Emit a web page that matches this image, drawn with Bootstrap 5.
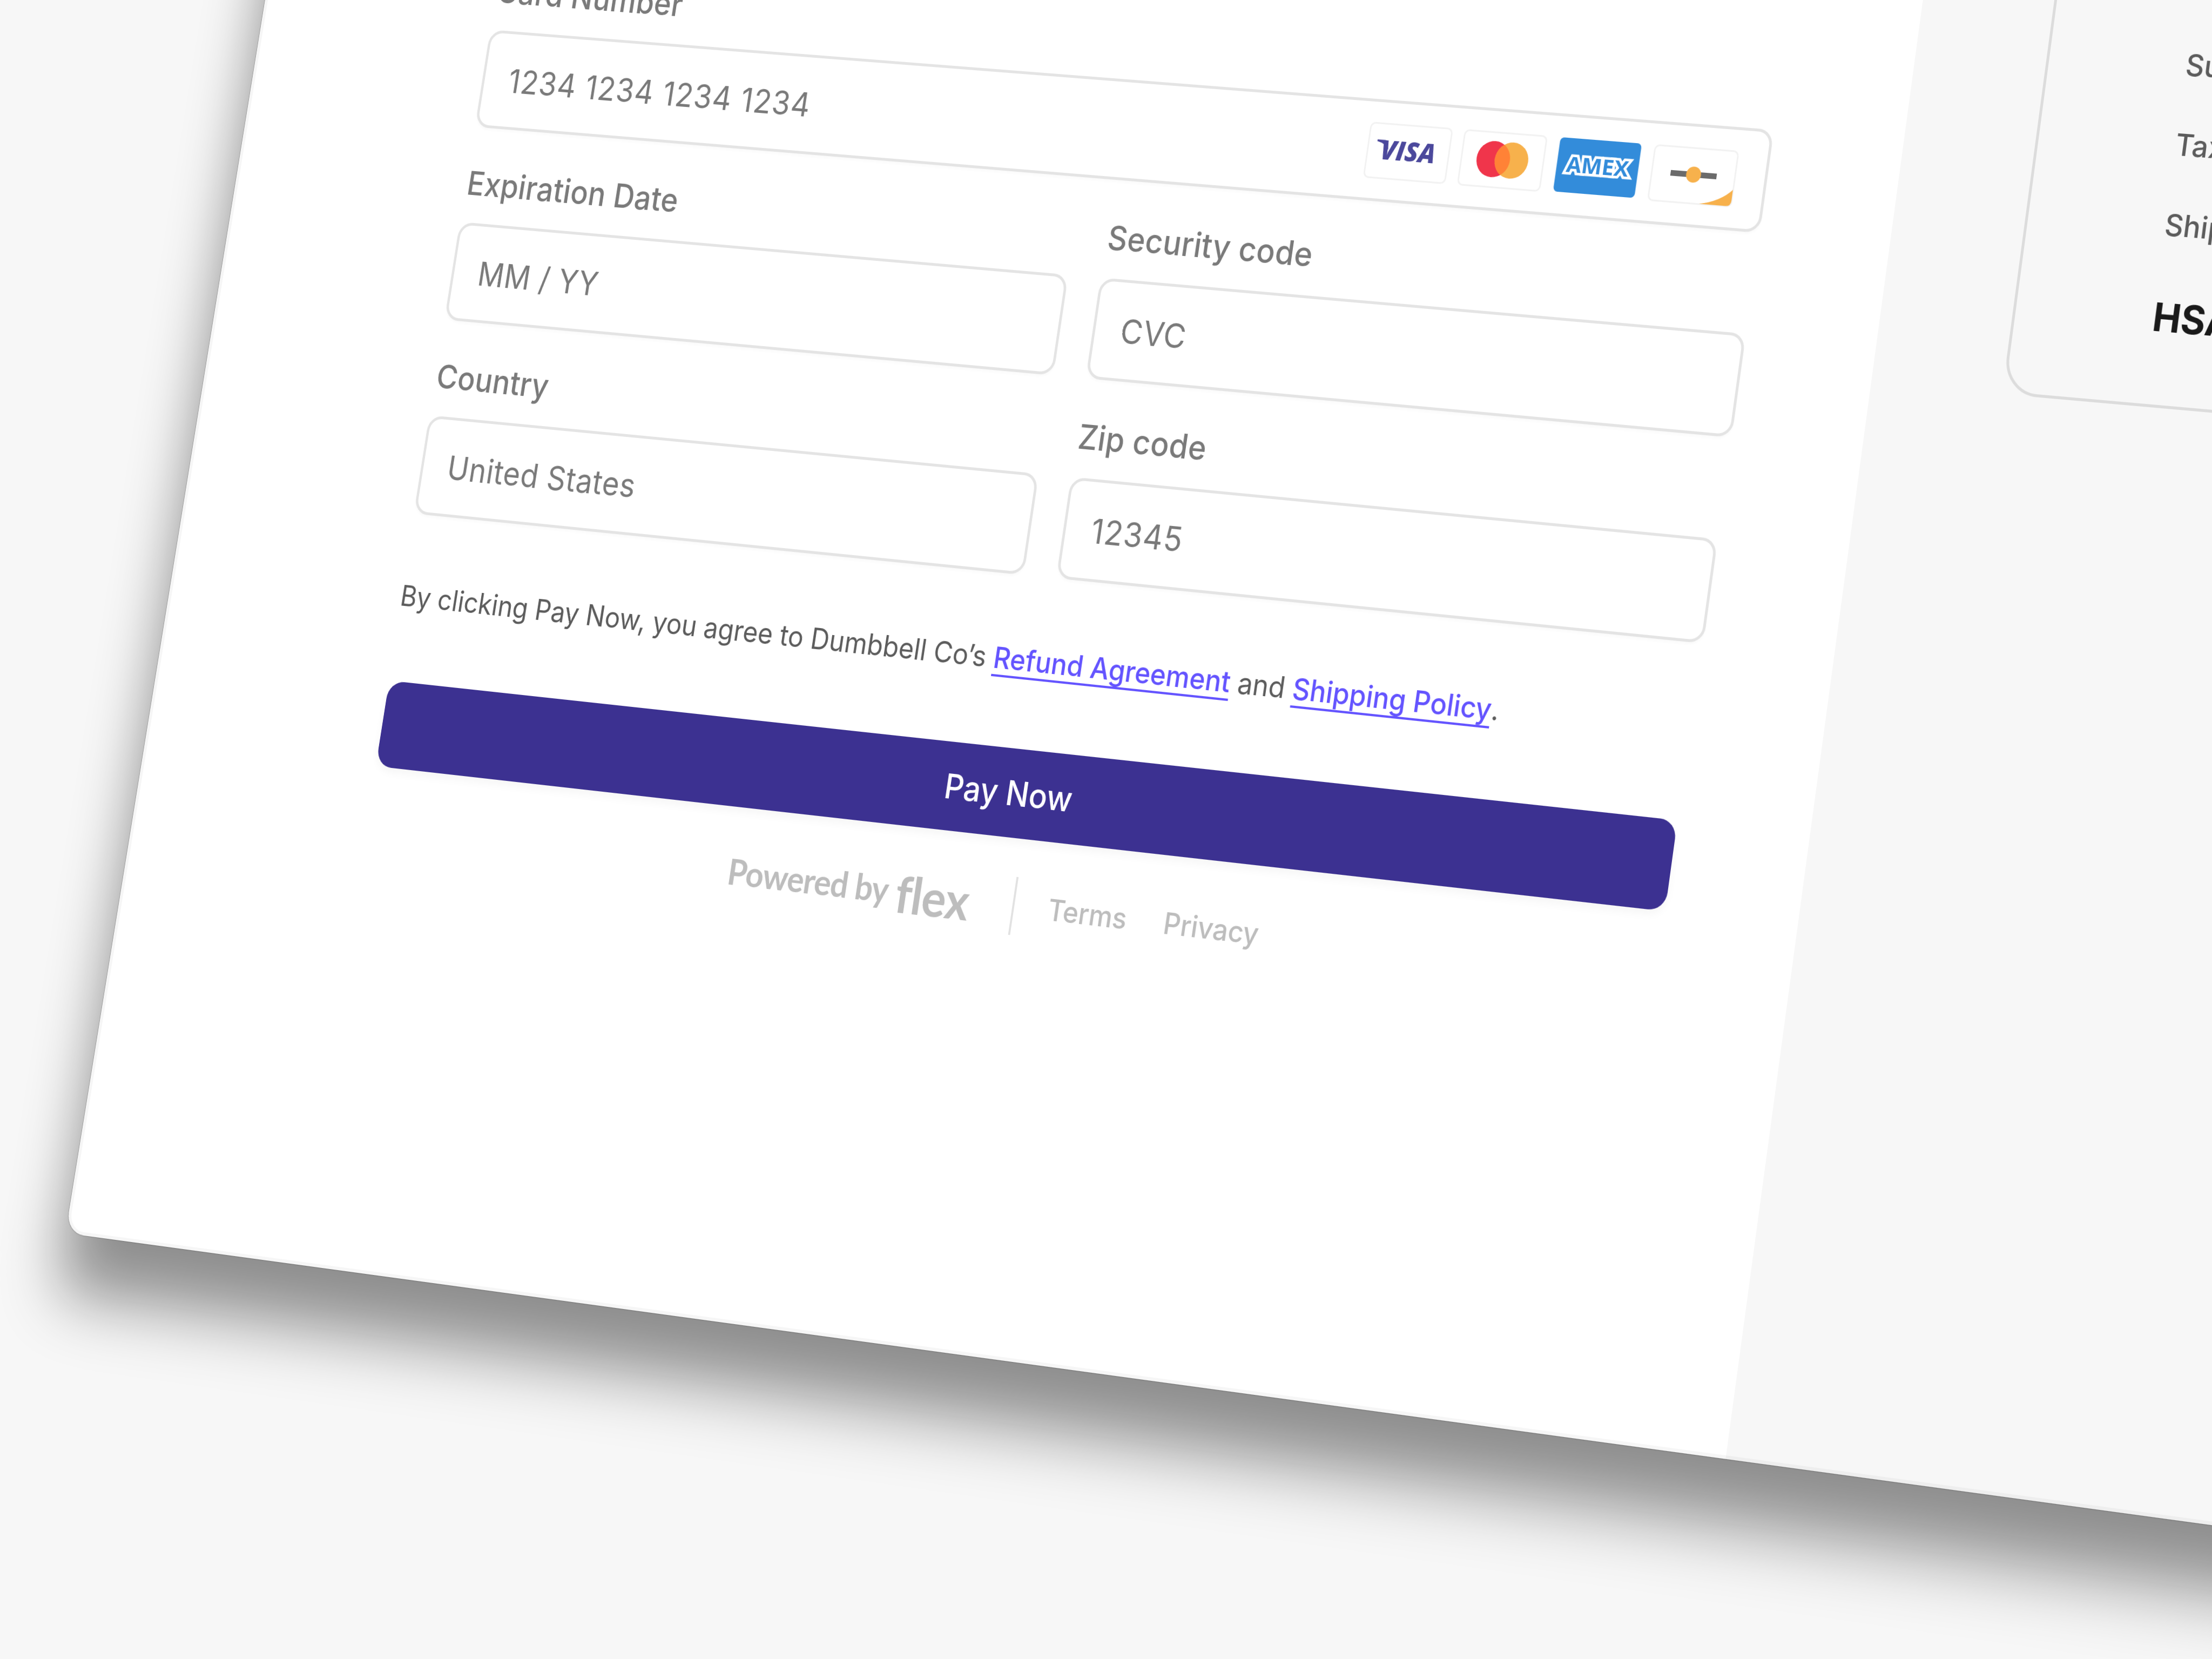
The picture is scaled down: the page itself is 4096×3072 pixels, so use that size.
<!DOCTYPE html>
<html lang="en">
<head>
  <meta charset="UTF-8">
  <meta name="viewport" content="width=device-width, initial-scale=1">
  <title>Checkout</title>
  <link href="https://cdn.jsdelivr.net/npm/bootstrap@5.3.3/dist/css/bootstrap.min.css" rel="stylesheet">
  <style>
    html, body {
      height: 100%;
      overflow: hidden;
      background-color: #f7f7f7;
    }
    body {
      font-family: Inter, "Liberation Sans", sans-serif;
      color: #5c5c5c;
    }

    /* the checkout window, tilted in perspective around the corner of the card field */
    .checkout-window {
      width: 5600px;
      height: 3054px;
      border-radius: 38px;
      background-color: #fff;
      box-shadow: 0 0 2px rgba(0, 0, 0, .6), 0 105px 120px rgba(0, 0, 0, .43);
      transform-origin: 486px 800px;
      transform: translate(423.3px, -743px)
        matrix3d(.87821, .06859, 0, -.000021823, -.15719, .9938, 0, -.0000086225, 0, 0, 1, 0, 0, 0, 0, 1);
    }
    .window-edge {
      inset: 0;
      border: 6px solid rgba(0, 0, 0, .035);
      border-radius: 38px;
      pointer-events: none;
    }

    .pay-side {
      width: 3283px;
      padding: 700px 0 0 484px;
    }
    .pay-form { width: 2556px; }
    .field-label {
      height: 98px;
      padding-left: 3px;
      font-size: 60px;
      font-weight: 500;
      letter-spacing: .3px;
      line-height: 51px;
      color: #7a7a7a;
      white-space: nowrap;
    }
    .field-box {
      height: 181px;
      padding: 0 54px 0 50px;
      border: 5px solid #e4e4e4;
      border-radius: 28px;
      box-shadow: 0 4px 4px rgba(0, 0, 0, .02);
      font-size: 60px;
      letter-spacing: .8px;
      color: #7a7a7a;
    }
    .field-digits { letter-spacing: 1.5px; }
    .field-row {
      gap: 64px;
      margin-top: 78px;
    }
    .brand-icons { gap: 22px; letter-spacing: 0; }
    .brand-icons svg { display: block; }

    .agree-text {
      margin: 110px 0 0;
      font-size: 52px;
      line-height: 80px;
      letter-spacing: -.05px;
      white-space: nowrap;
    }
    .agree-text a {
      color: #6454ff;
      font-weight: 500;
      text-underline-offset: 11px;
      text-decoration-thickness: 4px;
    }
    .pay-btn {
      height: 156px;
      margin: 115px 3px 0 4px;
      border: 0;
      border-radius: 32px;
      background-color: #3c3191;
      box-shadow: 0 8px 16px rgba(0, 0, 0, .04);
      font-size: 60px;
      font-weight: 450;
      color: #fff;
    }
    .powered-row {
      margin: 66px 0 0 750px;
      height: 104px;
      color: #bdbdbd;
      white-space: nowrap;
    }
    .powered-by {
      margin-bottom: 8px;
      font-family: Lato, sans-serif;
      font-size: 63px;
      font-weight: 700;
      letter-spacing: -1px;
    }
    .flex-logo {
      margin-left: 16px;
      font-family: Lato, sans-serif;
      font-size: 90px;
      font-weight: 700;
      font-variant-ligatures: none;
      letter-spacing: -1px;
    }
    .powered-rule { width: 4px; height: 102px; background-color: #e2e2e2; margin-left: 86px; }
    .powered-link { font-size: 52px; font-weight: 500; letter-spacing: -.2px; margin-left: 66px; }
    .powered-link + .powered-link { margin-left: 72px; }

    .order-side {
      background-color: #f7f7f7;
      padding-left: 241px;
    }
    .order-box {
      width: 2000px;
      height: 1220px;
      padding: 0 0 80px 249px;
      border: 5px solid #dcdcdc;
      border-radius: 64px;
    }
    .order-line {
      height: 138px;
      font-size: 52px;
      font-weight: 500;
      white-space: nowrap;
    }
    .order-total {
      height: 140px;
      margin-top: 18px;
      font-size: 68px;
      font-weight: 650;
      color: #1a1a1a;
    }
  </style>
</head>
<body>
<div class="checkout-window d-flex position-relative overflow-visible">

  <div class="pay-side flex-shrink-0">
    <form class="pay-form">
      <div class="field-label">Card Number</div>
      <div class="field-box d-flex align-items-center justify-content-between">
        <span class="field-digits">1234 1234 1234 1234</span>
        <div class="brand-icons d-flex">
          <svg width="160" height="100" viewBox="0 0 160 100">
            <rect x="1.5" y="1.5" width="157" height="97" rx="9" fill="#fff" stroke="#f2f2f2" stroke-width="3"/>
            <path d="M18 30.500h15q6 0 7 7l1 10q-7-11-23-14z" fill="#4b489c"/>
            <text x="27" y="65.500" font-family="Open Sans" font-size="48" font-weight="800" font-style="italic" fill="#4b489c" textLength="106" lengthAdjust="spacingAndGlyphs">VISA</text>
          </svg>
          <svg width="160" height="100" viewBox="0 0 160 100">
            <rect x="1.5" y="1.5" width="157" height="97" rx="9" fill="#fff" stroke="#f2f2f2" stroke-width="3"/>
            <circle cx="62.5" cy="49" r="32" fill="#f0354b"/>
            <circle cx="97.5" cy="49" r="32" fill="#f7b14c"/>
            <path d="M80 22.2a32 32 0 0 1 0 53.6a32 32 0 0 1 0-53.6z" fill="#ff8236"/>
          </svg>
          <svg width="160" height="100" viewBox="0 0 160 100">
            <rect x="2.5" y="1" width="155" height="96" rx="8" fill="#338cda"/>
            <text x="21" y="61.500" font-family="Open Sans" font-size="38" font-weight="700" fill="#338cda" stroke="#fff" stroke-width="9" paint-order="stroke" textLength="118" lengthAdjust="spacingAndGlyphs">AMEX</text>
          </svg>
          <svg width="160" height="100" viewBox="0 0 160 100">
            <rect x="1.5" y="1.5" width="157" height="97" rx="9" fill="#fff" stroke="#f2f2f2" stroke-width="3"/>
            <rect x="37" y="43" width="87" height="10" fill="#6b6b6b"/>
            <circle cx="80.5" cy="48" r="14" fill="#f7b14c"/>
            <path d="M98 98Q137 91 158 69V88Q158 98 148 98Z" fill="#f7b14c"/>
          </svg>
        </div>
      </div>

      <div class="field-row d-flex">
        <div class="flex-fill w-50">
          <div class="field-label">Expiration Date</div>
          <div class="field-box d-flex align-items-center">MM / YY</div>
        </div>
        <div class="flex-fill w-50">
          <div class="field-label">Security code</div>
          <div class="field-box d-flex align-items-center">CVC</div>
        </div>
      </div>

      <div class="field-row d-flex">
        <div class="flex-fill w-50">
          <div class="field-label">Country</div>
          <div class="field-box d-flex align-items-center">United States</div>
        </div>
        <div class="flex-fill w-50">
          <div class="field-label">Zip code</div>
          <div class="field-box field-digits d-flex align-items-center">12345</div>
        </div>
      </div>

      <p class="agree-text">By clicking Pay Now, you agree to Dumbbell Co’s <a href="#">Refund Agreement</a> and <a href="#">Shipping Policy</a>.</p>

      <div class="pay-btn d-flex align-items-center justify-content-center">Pay Now</div>

      <div class="powered-row d-flex align-items-center">
        <span class="powered-by">Powered by</span>
        <span class="flex-logo">flex</span>
        <span class="powered-rule"></span>
        <span class="powered-link">Terms</span>
        <span class="powered-link">Privacy</span>
      </div>
    </form>
  </div>

  <div class="order-side flex-grow-1">
    <div class="order-box d-flex flex-column justify-content-end">
      <div class="order-line d-flex align-items-center">Subtotal</div>
      <div class="order-line d-flex align-items-center">Tax</div>
      <div class="order-line d-flex align-items-center">Shipping</div>
      <div class="order-total d-flex align-items-center">HSA</div>
    </div>
  </div>

  <div class="window-edge position-absolute"></div>
</div>
<script src="https://cdn.jsdelivr.net/npm/bootstrap@5.3.3/dist/js/bootstrap.bundle.min.js"></script>
</body>
</html>
